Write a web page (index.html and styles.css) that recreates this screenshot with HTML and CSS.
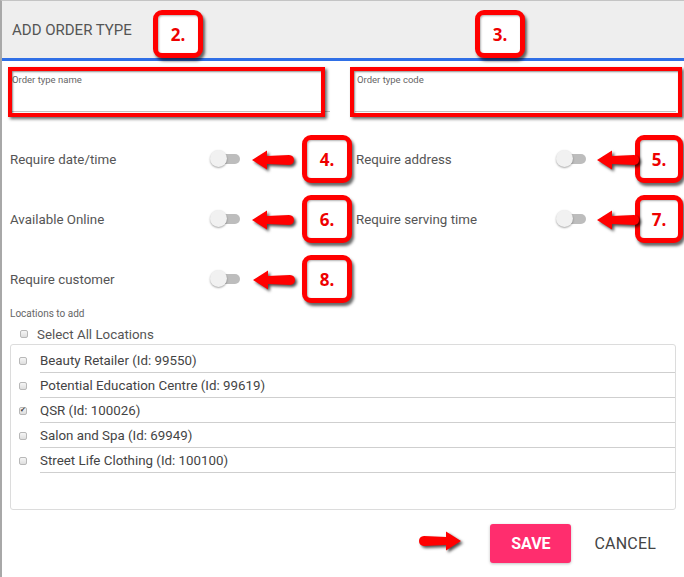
FILE: index.html
```
<!DOCTYPE html>
<html>
<head>
<meta charset="utf-8">
<link rel="stylesheet" href="styles.css">
</head>
<body>
<div class="frame">
  <div class="header">ADD ORDER TYPE</div>

  <div class="content">
    <div class="fields">
      <div class="field">
        <div class="field-label">Order type name</div>
        <div class="field-input"></div>
      </div>
      <div class="field">
        <div class="field-label">Order type code</div>
        <div class="field-input"></div>
      </div>
    </div>

    <div class="toggles">
      <div class="toggle-row"><span class="toggle-label">Require date/time</span><span class="switch"><span class="knob"></span></span></div>
      <div class="toggle-row"><span class="toggle-label">Require address</span><span class="switch"><span class="knob"></span></span></div>
      <div class="toggle-row"><span class="toggle-label">Available Online</span><span class="switch"><span class="knob"></span></span></div>
      <div class="toggle-row"><span class="toggle-label">Require serving time</span><span class="switch"><span class="knob"></span></span></div>
      <div class="toggle-row"><span class="toggle-label">Require customer</span><span class="switch"><span class="knob"></span></span></div>
    </div>

    <div class="loc-label">Locations to add</div>
    <div class="select-all"><span class="cb"></span><span>Select All Locations</span></div>

    <div class="loc-list">
      <div class="loc-item"><span class="cb-cell"><span class="cb"></span></span><span class="loc-text">Beauty Retailer (Id: 99550)</span></div>
      <div class="loc-item"><span class="cb-cell"><span class="cb"></span></span><span class="loc-text">Potential Education Centre (Id: 99619)</span></div>
      <div class="loc-item"><span class="cb-cell"><span class="cb checked">&#10004;</span></span><span class="loc-text">QSR (Id: 100026)</span></div>
      <div class="loc-item"><span class="cb-cell"><span class="cb"></span></span><span class="loc-text">Salon and Spa (Id: 69949)</span></div>
      <div class="loc-item"><span class="cb-cell"><span class="cb"></span></span><span class="loc-text">Street Life Clothing (Id: 100100)</span></div>
    </div>

    <div class="footer">
      <button class="btn-save">SAVE</button>
      <button class="btn-cancel">CANCEL</button>
    </div>
  </div>

  <!-- annotation overlays -->
  <div class="redbox rb1"></div>
  <div class="redbox rb2"></div>

  <div class="badge b2">2.</div>
  <div class="badge b3">3.</div>
  <div class="badge b4">4.</div>
  <div class="badge b5">5.</div>
  <div class="badge b6">6.</div>
  <div class="badge b7">7.</div>
  <div class="badge b8">8.</div>

  <svg class="arrow a4" viewBox="0 0 46 24" width="46" height="24"><path d="M2 12 L17 2.5 L17 8 L39 7 Q44 7.5 44 12 Q44 16.5 39 17 L17 16 L17 21.5 Z"/></svg>
  <svg class="arrow a5" viewBox="0 0 46 24" width="46" height="24"><path d="M2 12 L17 2.5 L17 8 L39 7 Q44 7.5 44 12 Q44 16.5 39 17 L17 16 L17 21.5 Z"/></svg>
  <svg class="arrow a6" viewBox="0 0 46 24" width="46" height="24"><path d="M2 12 L17 2.5 L17 8 L39 7 Q44 7.5 44 12 Q44 16.5 39 17 L17 16 L17 21.5 Z"/></svg>
  <svg class="arrow a7" viewBox="0 0 46 24" width="46" height="24"><path d="M2 12 L17 2.5 L17 8 L39 7 Q44 7.5 44 12 Q44 16.5 39 17 L17 16 L17 21.5 Z"/></svg>
  <svg class="arrow a8" viewBox="0 0 46 24" width="46" height="24"><path d="M2 12 L17 2.5 L17 8 L39 7 Q44 7.5 44 12 Q44 16.5 39 17 L17 16 L17 21.5 Z"/></svg>
  <svg class="arrow asave" viewBox="0 0 46 24" width="46" height="24"><path d="M44 12 L29 2.5 L29 8 L7 7 Q2 7.5 2 12 Q2 16.5 7 17 L29 16 L29 21.5 Z"/></svg>
</div>
</body>
</html>
```

FILE: styles.css
```
* { box-sizing: border-box; }

html, body {
  margin: 0;
  padding: 0;
  background: #fff;
}

body {
  font-family: Roboto, "Liberation Sans", Arial, sans-serif;
  color: #555;
}

.frame {
  position: relative;
  width: 684px;
  height: 577px;
  border-left: 2px solid #a8a8a8;
  border-top: 1px solid #c4c4c4;
  overflow: hidden;
}

.header {
  height: 60px;
  background: #eeeeee;
  border-bottom: 3px solid #2f6fe6;
  display: flex;
  align-items: center;
  padding-left: 10px;
  font-size: 15px;
  color: #555;
}

.content {
  padding: 0 8px 0 8px;
}

.fields {
  display: grid;
  grid-template-columns: 320px 321px;
  column-gap: 25px;
  margin-top: 13px;
}

.field-label {
  font-size: 9.5px;
  line-height: 11px;
  color: #666;
  padding-left: 2px;
}

.field-input {
  height: 27px;
  border-bottom: 1px solid #c2c2c2;
}

.toggles {
  display: grid;
  grid-template-columns: 346px 1fr;
  margin-top: 17px;
}

.toggle-row {
  height: 60px;
  display: flex;
  align-items: center;
  font-size: 13.33px;
  color: #555;
}

.toggle-label {
  width: 201px;
  flex: none;
}

.switch {
  position: relative;
  width: 29px;
  height: 10px;
  border-radius: 5px;
  background: #bdbdbd;
  flex: none;
}

.knob {
  position: absolute;
  left: -1px;
  top: -4px;
  width: 17px;
  height: 17px;
  border-radius: 50%;
  background: #f1f1f1;
  box-shadow: 0 1px 2px rgba(0, 0, 0, 0.35);
}

.loc-label {
  font-size: 10px;
  line-height: 10px;
  color: #666;
  margin-bottom: 5px;
}

.select-all {
  display: flex;
  align-items: center;
  height: 20px;
  font-size: 13.33px;
  color: #555;
}

.select-all .cb {
  margin-left: 10px;
  margin-right: 9px;
}

.cb {
  display: inline-flex;
  align-items: center;
  justify-content: center;
  width: 8px;
  height: 8px;
  border: 1px solid #b8b8b8;
  border-radius: 2px;
  background: linear-gradient(#f6f6f6, #dedede);
  font-size: 7px;
  line-height: 1;
  color: #444;
  flex: none;
}

.loc-list {
  height: 166px;
  border: 1px solid #dcdcdc;
  border-radius: 3px;
  padding-top: 3px;
}

.loc-item {
  display: flex;
  align-items: stretch;
  height: 25px;
}

.cb-cell {
  width: 29px;
  flex: none;
  display: flex;
  align-items: center;
  padding-left: 8px;
}

.loc-text {
  flex: 1;
  display: flex;
  align-items: center;
  border-bottom: 1px solid #cfcfcf;
  font-size: 13.33px;
  color: #444;
}

.footer {
  display: flex;
  justify-content: flex-end;
  align-items: center;
  margin-top: 14px;
  padding-right: 4px;
  gap: 7px;
}

.btn-save {
  width: 81px;
  height: 39px;
  border: none;
  border-radius: 3px;
  background: #ff2d6e;
  color: #fff;
  font-family: Roboto, "Liberation Sans", Arial, sans-serif;
  font-weight: bold;
  font-size: 16px;
  box-shadow: 0 1px 3px rgba(0, 0, 0, 0.25);
  padding: 0;
}

.btn-cancel {
  height: 39px;
  border: none;
  background: transparent;
  color: #444;
  font-family: Roboto, "Liberation Sans", Arial, sans-serif;
  font-size: 16px;
  letter-spacing: 0.2px;
  padding: 0 16px;
}

/* annotations */
.redbox {
  position: absolute;
  top: 66px;
  height: 50px;
  border: 4px solid #ff0000;
  box-shadow: 2px 2px 3px rgba(0, 0, 0, 0.6), inset 1px 1px 2px rgba(0, 0, 0, 0.45);
}
.rb1 { left: 6px; width: 317px; }
.rb2 { left: 348px; width: 332px; }

.badge {
  position: absolute;
  width: 50px;
  height: 48px;
  border: 5px solid #ff0000;
  border-radius: 9px;
  background: #fff;
  box-shadow: 2px 3px 3px rgba(0, 0, 0, 0.6), inset 1px 1px 2px rgba(0, 0, 0, 0.3);
  display: flex;
  align-items: center;
  justify-content: center;
  color: #ee0000;
  font-family: "Open Sans", "Liberation Sans", Arial, sans-serif;
  font-weight: bold;
  font-size: 17px;
}
.b2 { left: 151px; top: 9px; }
.b3 { left: 473px; top: 9px; }
.b4 { left: 300px; top: 134px; }
.b5 { left: 633px; top: 134px; width: 48px; }
.b6 { left: 300px; top: 194px; }
.b7 { left: 633px; top: 194px; width: 48px; }
.b8 { left: 300px; top: 254px; }

.arrow {
  position: absolute;
  fill: #ff0000;
  filter: drop-shadow(2px 2px 1.5px rgba(0, 0, 0, 0.7));
}
.a4 { left: 248px; top: 147px; }
.a5 { left: 593px; top: 147px; }
.a6 { left: 248px; top: 207px; }
.a7 { left: 593px; top: 207px; }
.a8 { left: 249px; top: 267px; }
.asave { left: 415px; top: 528px; }
```
